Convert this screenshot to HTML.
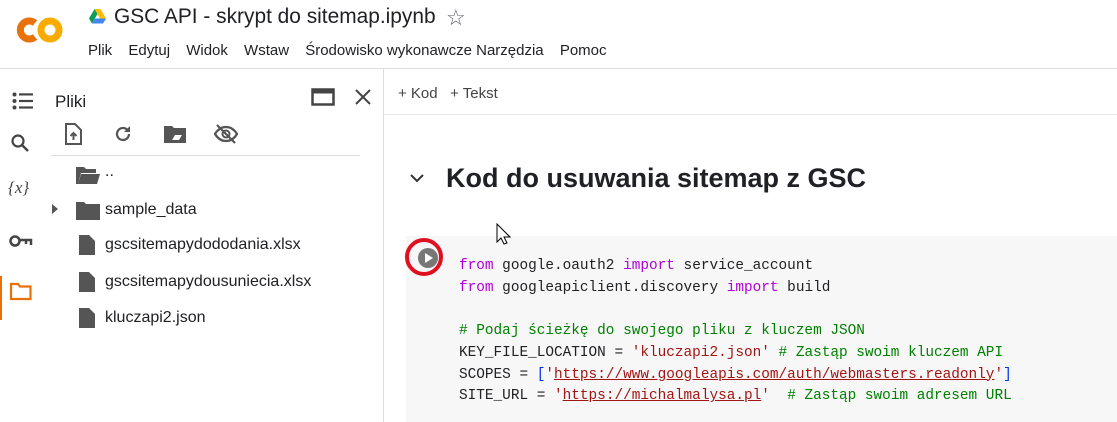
<!DOCTYPE html><html><head><meta charset="utf-8"><style>
body{margin:0;width:1117px;height:422px;overflow:hidden;background:#fff;font-family:"Liberation Sans",sans-serif;color:#202124;position:relative}
.a{position:absolute}
.menu span{margin-right:12px}
.code{font-family:"Liberation Mono",monospace;font-size:14.4px;line-height:21.7px;white-space:pre;color:#202124}
.k{color:#af00db}.c{color:#008000}.s{color:#a31515}.u{text-decoration:underline;text-decoration-color:#a31515}.b{color:#0431fa}
.file{font-size:16px;color:#202124}
</style></head><body>
<!-- logo -->
<svg class="a" style="left:15px;top:14px" width="50" height="32" viewBox="0 0 50 32"><path d="M20 9A9 9 0 1 0 20 23" fill="none" stroke="#e8710a" stroke-width="7"/><circle cx="35" cy="16" r="9" fill="none" stroke="#f9ab00" stroke-width="7"/></svg>
<svg class="a" style="left:89px;top:9px" width="17" height="15" viewBox="0 0 17 15"><path d="M5.5 0h6l5.5 9.5h-6z" fill="#fbbc04"/><path d="M5.5 0L0 9.5l3 5 5.5-9.5z" fill="#0f9d58"/><path d="M3 14.5h11l3-5H6z" fill="#4285f4"/></svg>
<div class="a" style="left:114px;top:5px;font-size:20.9px">GSC API - skrypt do sitemap.ipynb</div>
<div class="a" style="left:446px;top:5px;font-size:22px;color:#5f6368">☆</div>
<div class="a menu" style="left:88px;top:42px;font-size:15px">Plik <span></span>Edytuj <span></span>Widok <span></span>Wstaw <span></span>Środowisko wykonawcze Narzędzia <span></span>Pomoc</div>
<div class="a" style="left:0;top:68px;width:1117px;height:1px;background:#dadce0"></div>
<div class="a" style="left:383px;top:69px;width:1px;height:353px;background:#dadce0"></div>
<!-- left icon bar -->
<svg class="a" style="left:12px;top:92px" width="22" height="18"><g fill="#444"><circle cx="2.5" cy="2.5" r="2"/><circle cx="2.5" cy="9" r="2"/><circle cx="2.5" cy="15.5" r="2"/><rect x="7" y="1.3" width="14" height="2.2"/><rect x="7" y="7.9" width="14" height="2.2"/><rect x="7" y="14.4" width="14" height="2.2"/></g></svg>
<svg class="a" style="left:10px;top:133px" width="20" height="20" viewBox="0 0 20 20"><circle cx="8" cy="8" r="5.5" fill="none" stroke="#444" stroke-width="2.2"/><path d="M12 12l6 6" stroke="#444" stroke-width="2.5"/></svg>
<div class="a" style="left:8px;top:178px;font-size:17px;color:#444;font-family:'Liberation Serif',serif;font-style:italic">{<i>x</i>}</div>
<svg class="a" style="left:9px;top:234px" width="24" height="14" viewBox="0 0 24 14"><circle cx="6" cy="7" r="4.5" fill="none" stroke="#444" stroke-width="2.5"/><path d="M10 6h12v5M17 6v4" stroke="#444" stroke-width="2.5" fill="none"/></svg>
<div class="a" style="left:0;top:276px;width:2px;height:44px;background:#e8710a"></div>
<svg class="a" style="left:9px;top:281px" width="24" height="20" viewBox="0 0 24 20"><path d="M2 3h7l2 2.5h10.5v12.5h-19.5z" fill="none" stroke="#e8710a" stroke-width="2.2"/></svg>
<!-- files panel -->
<div class="a" style="left:55px;top:92px;font-size:17px">Pliki</div>
<svg class="a" style="left:311px;top:88px" width="24" height="18"><rect x="1.5" y="1.5" width="21" height="15" fill="none" stroke="#444" stroke-width="2.5"/><rect x="1.5" y="1.5" width="21" height="4" fill="#444"/></svg>
<svg class="a" style="left:354px;top:88px" width="18" height="18"><path d="M2 2l14 14M16 2L2 16" stroke="#444" stroke-width="2"/></svg>
<svg class="a" style="left:64px;top:123px" width="18" height="22" viewBox="0 0 18 22"><path d="M2 1h9l6 6v14H2z" fill="none" stroke="#555" stroke-width="2"/><path d="M9.5 17v-7M6.5 13l3-3 3 3" stroke="#555" stroke-width="2" fill="none"/></svg>
<svg class="a" style="left:113px;top:124px" width="20" height="20" viewBox="0 0 20 20"><path d="M16 10a6 6 0 1 1-2-4.5" fill="none" stroke="#555" stroke-width="2.2"/><path d="M17 2v6h-6z" fill="#555"/></svg>
<svg class="a" style="left:163px;top:124px" width="24" height="20" viewBox="0 0 24 20"><path d="M1 2h8l2 2h12v15H1z" fill="#555"/><path d="M9 16l3-5h7l-3 5z" fill="#fff"/></svg>
<svg class="a" style="left:213px;top:123px" width="26" height="22" viewBox="0 0 26 22"><path d="M2 11c3-5 7-7 11-7s8 2 11 7c-3 5-7 7-11 7s-8-2-11-7z" fill="none" stroke="#555" stroke-width="2.2"/><circle cx="13" cy="11" r="3.5" fill="none" stroke="#555" stroke-width="2"/><path d="M4 2l18 18" stroke="#555" stroke-width="2.2"/></svg>
<div class="a" style="left:51px;top:155px;width:309px;height:1px;background:#dadce0"></div>
<svg class="a" style="left:76px;top:166px" width="24" height="19" viewBox="0 0 24 19"><path d="M0 1h8l2 2h10v4H5L2 18H0z" fill="#555"/><path d="M5 8h19l-3 10H2z" fill="#555"/></svg>
<div class="a file" style="left:105px;top:163px">..</div>
<div class="a" style="left:52px;top:204px;width:0;height:0;border-left:6px solid #555;border-top:5px solid transparent;border-bottom:5px solid transparent"></div>
<svg class="a" style="left:76px;top:201px" width="24" height="19"><path d="M0 1h8l2 2h14v16H0z" fill="#555"/></svg>
<div class="a file" style="left:105px;top:201px">sample_data</div>
<svg class="a" style="left:79px;top:235px" width="16" height="20"><path d="M0 0h10l6 6v14H0z" fill="#555"/></svg>
<div class="a file" style="left:105px;top:236px">gscsitemapydododania.xlsx</div>
<svg class="a" style="left:79px;top:272px" width="16" height="20"><path d="M0 0h10l6 6v14H0z" fill="#555"/></svg>
<div class="a file" style="left:105px;top:273px">gscsitemapydousuniecia.xlsx</div>
<svg class="a" style="left:79px;top:308px" width="16" height="20"><path d="M0 0h10l6 6v14H0z" fill="#555"/></svg>
<div class="a file" style="left:105px;top:309px">kluczapi2.json</div>
<!-- toolbar -->
<div class="a" style="left:398px;top:85px;font-size:15px;color:#444">+ Kod &nbsp;&nbsp;+ Tekst</div>
<div class="a" style="left:384px;top:114px;width:733px;height:1px;background:#e8e8e8"></div>
<svg class="a" style="left:410px;top:174px" width="14" height="10"><path d="M1 1l6 6 6-6" fill="none" stroke="#333" stroke-width="2"/></svg>
<div class="a" style="left:446px;top:163px;font-size:27px;font-weight:bold">Kod do usuwania sitemap z GSC</div>
<div class="a" style="left:406px;top:236px;width:711px;height:186px;background:#f7f7f7"></div>
<!-- cursor -->
<svg class="a" style="left:496px;top:223px" width="20" height="24"><path d="M1 1v18l4-4 3 6 3-1-3-6h6z" fill="#fff" stroke="#000" stroke-width="1"/></svg>
<div class="a" style="left:405px;top:238px;width:38px;height:38px;border:4px solid #e01020;border-radius:50%;box-sizing:border-box"></div>
<div class="a" style="left:418px;top:248px;width:20px;height:20px;border-radius:50%;background:#777"></div>
<div class="a" style="left:425px;top:253px;width:0;height:0;border-left:8px solid #fff;border-top:5px solid transparent;border-bottom:5px solid transparent"></div>
<div class="a code" style="left:459px;top:256px"><span class="k">from</span> google.oauth2 <span class="k">import</span> service_account
<span class="k">from</span> googleapiclient.discovery <span class="k">import</span> build

<span class="c"># Podaj ścieżkę do swojego pliku z kluczem JSON</span>
KEY_FILE_LOCATION = <span class="s">'kluczapi2.json'</span> <span class="c"># Zastąp swoim kluczem API</span>
SCOPES = <span class="b">[</span><span class="s">'<span class="u">https://www.googleapis.com/auth/webmasters.readonly</span>'</span><span class="b">]</span>
SITE_URL = <span class="s">'<span class="u">https://michalmalysa.pl</span>'</span>  <span class="c"># Zastąp swoim adresem URL</span></div>
</body></html>
